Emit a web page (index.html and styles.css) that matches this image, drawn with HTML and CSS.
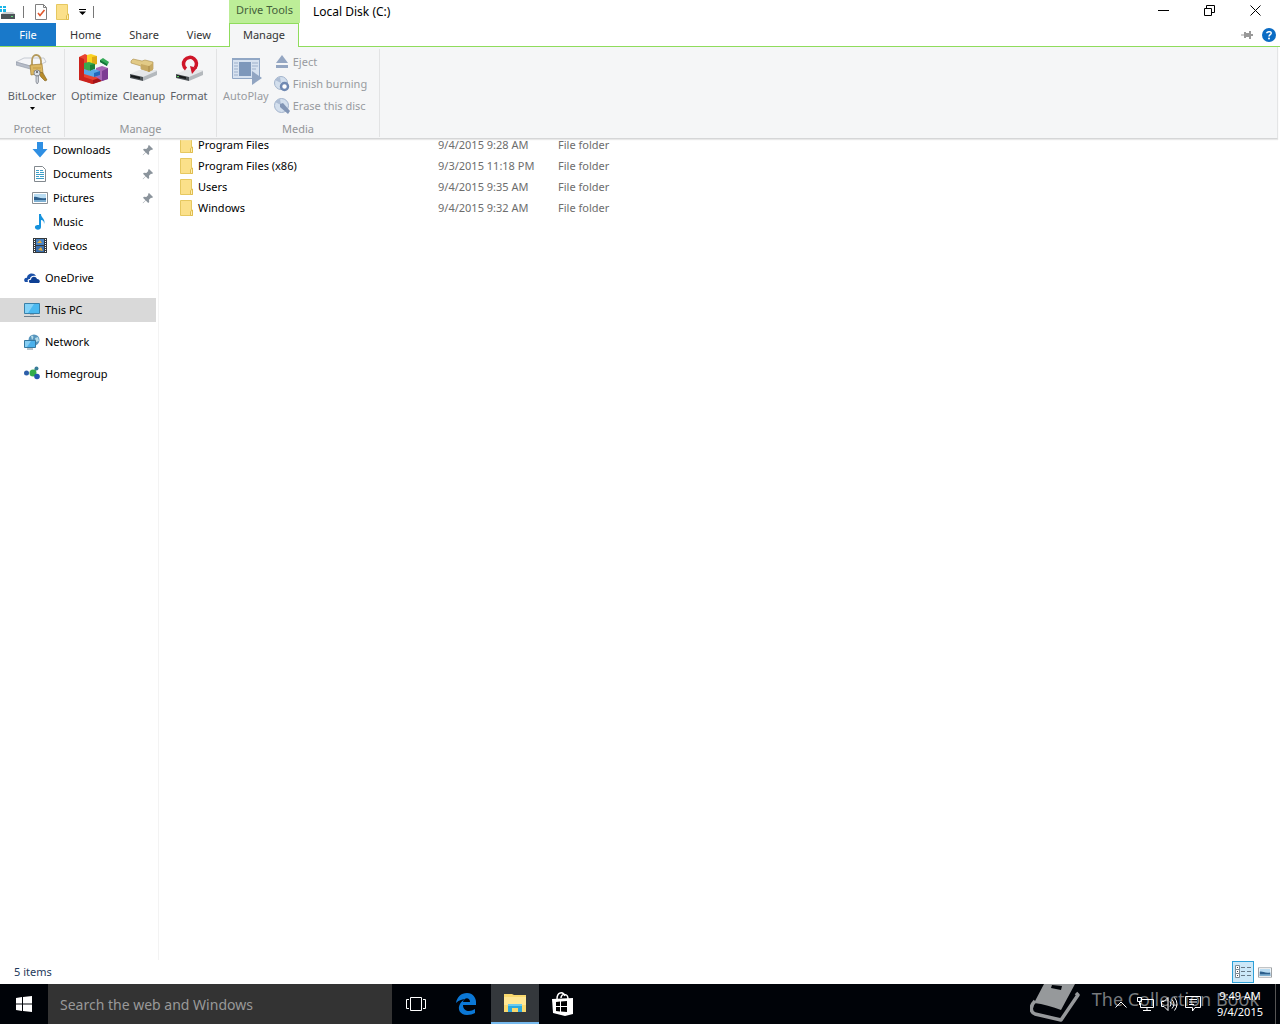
FILE: index.html
```html
<!DOCTYPE html>
<html lang="en">
<head>
<meta charset="utf-8">
<meta name="viewport" content="width=device-width, initial-scale=1">
<title>Local Disk (C:)</title>
<link rel="stylesheet" href="styles.css">
</head>
<body>

<!-- shared icons -->
<svg class="defs" aria-hidden="true">
  <symbol id="folder" viewBox="0 0 14 16">
    <path d="M0.5 0.5h11v10h1v5h-12z" fill="#fbe08a" stroke="#e6c860"/>
    <path d="M10.500 15.500v-4l2-1.500v5.500z" fill="#fff0b0" stroke="#e0bd50"/>
  </symbol>
  <symbol id="pin" viewBox="0 0 12 12">
    <path d="M7 1l4 4-1 1-1-.3-2 2 .2 2.300-1 1L3.800 8.500 1 11.300.7 11 3.500 8.200 1 5.800l1-1 2.300.2 2-2L6 2z" fill="#8b949c"/>
  </symbol>
  <symbol id="picture" viewBox="0 0 16 12">
    <path d="M.5.5h15v11H.5z" fill="#fff" stroke="#8a8f94"/>
    <path d="M2 2h12v8H2z" fill="#b9dcf2"/>
    <path d="M2 5c3-1 5 2 12 1v4H2z" fill="#2d5f8c"/>
    <path d="M2 8h12v2H2z" fill="#7fb0d2"/>
  </symbol>
</svg>

<header>
  <div class="titlebar">
    <div class="quick">
      <svg class="drive" width="15" height="16" viewBox="0 0 15 16">
        <path d="M0 2h2v2H0zM3 2h3v2H3zM0 5h2v3H0zM3 5h3v3H3z" fill="#19b5e8"/>
        <path d="M4 8h9l2 2H1z" fill="#c9ced2"/>
        <path d="M1 10h14v5H1z" fill="#4d5459"/>
        <path d="M11 12h2v1h-2z" fill="#5fe07a"/>
      </svg>
      <span class="bar"></span>
      <button class="q" title="Properties">
        <svg width="12" height="16" viewBox="0 0 12 16">
          <path d="M.5.5h8l3 3v12H.5z" fill="#fff" stroke="#808080"/>
          <path d="M8.500.5v3h3" fill="none" stroke="#808080"/>
          <path d="M3 9l2 2.500L9.500 6" fill="none" stroke="#e0572c" stroke-width="1.600"/>
        </svg>
      </button>
      <button class="q" title="New folder"><svg width="14" height="16"><use href="#folder"/></svg></button>
      <button class="q more" title="Customize"><svg width="7" height="6" viewBox="0 0 7 6"><path d="M0 0h7v1H0zM0 2.500h7L3.500 6z"/></svg></button>
      <span class="bar"></span>
    </div>
    <div class="context">Drive Tools</div>
    <h1>Local Disk (C:)</h1>
    <div class="winbtns">
      <button title="Minimize"><svg width="11" height="11" viewBox="0 0 11 11"><path d="M0 5.500h11" stroke="#000"/></svg></button>
      <button title="Restore"><svg width="11" height="11" viewBox="0 0 11 11"><path d="M.5 3.500h7v7h-7zM2.500 3V.5h8v7H8" fill="none" stroke="#000"/></svg></button>
      <button title="Close"><svg width="11" height="11" viewBox="0 0 11 11"><path d="M.5.5l10 10M10.500.5l-10 10" stroke="#000"/></svg></button>
    </div>
  </div>

  <div class="tabrow">
    <nav class="tabs">
      <button class="file">File</button>
      <button>Home</button>
      <button>Share</button>
      <button>View</button>
      <button class="active">Manage</button>
    </nav>
    <div class="help">
      <button title="Pin the ribbon"><svg width="12" height="8" viewBox="0 0 12 8"><path d="M0 3.500h3V1h2v1h3V0h2v3h2v2h-2v3H8V6H5v1H3V4.500H0z" fill="#999"/></svg></button>
      <button title="Help">
        <svg width="14" height="14" viewBox="0 0 14 14">
          <circle cx="7" cy="7" r="7" fill="#0b6cc4"/>
          <path d="M4.800 5.300C4.900 3.200 9.200 3 9.200 5.200 9.200 6.700 7 6.700 7 8.500" fill="none" stroke="#fff" stroke-width="1.500"/>
          <circle cx="7" cy="10.500" r="1" fill="#fff"/>
        </svg>
      </button>
    </div>
  </div>

  <div class="ribbon">
    <section class="group protect">
      <div class="tools">
        <button class="tool">
          <svg width="32" height="32" viewBox="0 0 32 32">
            <path d="M0 9l8-4h20l2 4-12 5z" fill="#f4f5f8" stroke="#b3b9c3" stroke-width=".7"/>
            <path d="M0 9l18 5v3L0 12z" fill="#b7bdc9" stroke="#8f97a6" stroke-width=".6"/>
            <path d="M16 12V8c0-8 8-8 9 0v4" fill="none" stroke="#b49a5c" stroke-width="1.800"/>
            <path d="M14 12l12-1 1 9-12 2z" fill="#dcb863" stroke="#a07c30" stroke-width=".7"/>
            <path d="M17 15h8M17 18h8" stroke="#c39a45"/>
            <path d="M24 19l3 1 4 7-2 1-4-4-2-3z" fill="#b88c2b" stroke="#80601e" stroke-width=".6"/>
            <circle cx="21" cy="20" r="3" fill="#dce0e5" stroke="#777d87" stroke-width=".8"/>
            <path d="M20 23h2.500v6l-1.300 2L20 29z" fill="#ccd1d8" stroke="#777d87" stroke-width=".7"/>
            <circle cx="21" cy="19" r="1" fill="#555"/>
          </svg>
          <span>BitLocker</span>
          <svg class="arrow" width="5" height="3" viewBox="0 0 5 3"><path d="M0 0h5L2.500 3z"/></svg>
        </button>
      </div>
      <h2>Protect</h2>
    </section>

    <section class="group manage">
      <div class="tools">
        <button class="tool">
          <svg width="32" height="32" viewBox="0 0 32 32">
            <path d="M1 4l6-3 4 2v18l9 3 3 1v3l-9 3-13-5z" fill="#ea4430"/>
            <path d="M1 4l5 2v18l9 3v4L1 27z" fill="#cb231d"/>
            <path d="M15 27l9-3v4l-9 3z" fill="#a51419"/>
            <path d="M9 2l4-1 6 2v8l-5 1-5-2z" fill="#fbd322"/>
            <path d="M14 4l5-1v8l-5 1z" fill="#dfa815"/>
            <path d="M18 15l6-2 6 2v11l-6 2-6-4z" fill="#a565b5"/>
            <path d="M24 18l6-3v11l-6 2z" fill="#7c3b93"/>
            <path d="M6 10l5-1 6 2v5l-5 2-6-2z" fill="#38a94f"/>
            <path d="M12 12l5-1v5l-5 2z" fill="#1c8039"/>
            <path d="M6 16l6 2 4-2 6 2v4l-6 2-10-3z" fill="#5aa9e8"/>
            <path d="M16 20l6-2v4l-6 2z" fill="#2468bb"/>
            <path d="M22 7l3-2 6 4-2 4-7-4z" fill="#35a957"/>
            <path d="M22 7l7 4v2l-7-4z" fill="#13733a"/>
          </svg>
          <span>Optimize</span>
        </button>
        <button class="tool">
          <svg width="32" height="32" viewBox="0 0 32 32">
            <path d="M2 21l9-4h18v3l-14 7-13-3z" fill="#e5e7e9"/>
            <path d="M2 21l13 3v4L2 25z" fill="#4a5054"/>
            <path d="M15 24l14-6v4l-14 6z" fill="#b4b9bd"/>
            <path d="M3 22l9 2v2l-9-2z" fill="#151819"/>
            <path d="M3 8l2-2 9 2 3-1 8 2v7l-4 2-8-2v-3L3 10z" fill="#e2ca86" stroke="#a98c47" stroke-width=".6"/>
            <path d="M13 11l8 2 4-3v7l-4 2-8-3z" fill="#c8aa63"/>
            <path d="M21 13v6" stroke="#9a7c3c" stroke-width=".7"/>
          </svg>
          <span>Cleanup</span>
        </button>
        <button class="tool">
          <svg width="32" height="32" viewBox="0 0 32 32">
            <path d="M3 21l9-4h18v3l-14 7-13-3z" fill="#e5e7e9"/>
            <path d="M3 21l13 3v4L3 25z" fill="#4a5054"/>
            <path d="M16 24l14-6v4l-14 6z" fill="#b4b9bd"/>
            <path d="M4 22l9 2v2l-9-2z" fill="#151819"/>
            <path d="M13 16A6.500 6.500 0 1 1 22 15" fill="none" stroke="#cf1629" stroke-width="3.500"/>
            <path d="M17 13l7 2-5 6z" fill="#cf1629"/>
            <path d="M4 23h2v1H4z" fill="#5bd05b"/>
          </svg>
          <span>Format</span>
        </button>
      </div>
      <h2>Manage</h2>
    </section>

    <section class="group media">
      <div class="tools">
        <button class="tool" disabled>
          <svg width="32" height="32" viewBox="0 0 32 32">
            <path d="M2.500 5.500h27v20h-27z" fill="#d7e2f0" stroke="#91a7c5"/>
            <path d="M2 5h28v2H2z" fill="#91a7c5"/>
            <path d="M4 10h4M4 13h4M4 16h4M4 19h4M4 22h4M22 10h6M22 13h6M22 16h4" stroke="#9db0cb"/>
            <path d="M9 9h12v14H9z" fill="#7e98bb"/>
            <path d="M22 18l10 7-10 7z" fill="#91a5c2"/>
          </svg>
          <span>AutoPlay</span>
        </button>
        <div class="small">
          <button disabled><svg width="16" height="16" viewBox="0 0 16 16"><path d="M8 1l6 8H2zM2 11h12v3H2z" fill="#94a6c2"/></svg>Eject</button>
          <button disabled>
            <svg width="16" height="16" viewBox="0 0 16 16"><circle cx="7" cy="7" r="6.500" fill="#d3dfed" stroke="#a2b3cc"/><path d="M7 7L1 4a7 7 0 0 1 5-3z" fill="#adbdd4"/><circle cx="10.500" cy="10.500" r="3.500" fill="#fff" stroke="#7089b2" stroke-width="2.500"/></svg>Finish burning</button>
          <button disabled>
            <svg width="16" height="16" viewBox="0 0 16 16"><circle cx="7.500" cy="7.500" r="7" fill="#d3dfed" stroke="#a2b3cc"/><path d="M7 7L1 4a7 7 0 0 1 5-3z" fill="#adbdd4"/><path d="M6 6l3-1 7 8-2 3-8-7z" fill="#8195b5"/></svg>Erase this disc</button>
        </div>
      </div>
      <h2>Media</h2>
    </section>
  </div>
</header>

<main>
  <aside>
    <ul class="places">
      <li class="sub"><a href="#">
        <svg width="16" height="16" viewBox="0 0 16 16"><path d="M5 0h6v7h4.500L8 15.500.5 7H5z" fill="#2f8fe3"/></svg>
        Downloads</a><svg class="pinned" width="12" height="12"><use href="#pin"/></svg></li>
      <li class="sub"><a href="#">
        <svg width="16" height="16" viewBox="0 0 16 16"><path d="M2.500.5h8l3 3v12h-11z" fill="#fff" stroke="#82898e"/><path d="M4 6.500h3M4 4.500h3M8 4.500h3M8 6.500h4M4 8.500h8M4 10.500h3M8 10.500h4M4 12.500h8" stroke="#3d9fc8"/></svg>
        Documents</a><svg class="pinned" width="12" height="12"><use href="#pin"/></svg></li>
      <li class="sub"><a href="#">
        <svg width="16" height="12"><use href="#picture"/></svg>
        Pictures</a><svg class="pinned" width="12" height="12"><use href="#pin"/></svg></li>
      <li class="sub"><a href="#">
        <svg width="16" height="16" viewBox="0 0 16 16"><path d="M7 0h2c0 4 5 5 3 10 0-3-1-4-3-4v7c0 4-7 3-6 0 0-2 3-2 4-2z" fill="#1592dd"/></svg>
        Music</a></li>
      <li class="sub"><a href="#">
        <svg width="16" height="16" viewBox="0 0 16 16"><path d="M1 0h14v15H1z" fill="#34393d"/><path d="M4 1h8v6H4z" fill="#4883c4"/><path d="M4 8h8v6H4z" fill="#386eae"/><path d="M5 5l3-3 2 3zM6 12l3-3 2 4z" fill="#e0a93c"/><path d="M2.500 1v14M13.500 1v14" stroke="#fff" stroke-dasharray="1 1"/></svg>
        Videos</a></li>
      <li class="root"><a href="#">
        <svg width="16" height="16" viewBox="0 0 16 16"><path d="M1 12c-2-2 0-5 2-4 0-5 7-6 9-2-4-1-6 1-6 3-2 0-3 1-2 3z" fill="#1a50a8"/><path d="M6 13c-2-1-1-4 1-3 0-4 5-4 6-1 3 0 4 4 1 4z" fill="#0d3f94"/></svg>
        OneDrive</a></li>
      <li class="root current"><a href="#">
        <svg width="16" height="16" viewBox="0 0 16 16"><path d="M.5 1.500h15v10H.5z" fill="#4bb9f0" stroke="#3980a9"/><path d="M1 2h9L4 11H1z" fill="#83d2f8"/><path d="M6 12h4v1H6z" fill="#a7afb5"/><path d="M0 14h16v1H0z" fill="#6d7e8b"/></svg>
        This PC</a></li>
      <li class="root"><a href="#">
        <svg width="16" height="16" viewBox="0 0 16 16"><circle cx="10" cy="6" r="5.500" fill="#5795bd"/><path d="M7 2c3-1 3 2 1 4zM11 4l3-1 1 4-3 1z" fill="#b4dbe9"/><path d="M.5 6.500h11v7H.5z" fill="#4cb1eb" stroke="#34789f"/><path d="M1 7h6l-4 6H1z" fill="#87cef3"/><path d="M3 15h6" stroke="#718796"/></svg>
        Network</a></li>
      <li class="root"><a href="#">
        <svg width="16" height="16" viewBox="0 0 16 16"><circle cx="2.500" cy="7" r="2.500" fill="#2d5fa9"/><path d="M9 7l3-4M9 7l5 4" stroke="#55ad63" stroke-width="2"/><circle cx="9" cy="7" r="3.500" fill="#32ad4b"/><circle cx="12.500" cy="2.500" r="2" fill="#397c98"/><circle cx="13" cy="10.500" r="2.800" fill="#2456b0"/></svg>
        Homegroup</a></li>
    </ul>
  </aside>

  <div class="list">
    <table>
      <tr>
        <td class="name"><svg width="14" height="16"><use href="#folder"/></svg>Program Files</td>
        <td class="date">9/4/2015 9:28 AM</td>
        <td>File folder</td>
      </tr>
      <tr>
        <td class="name"><svg width="14" height="16"><use href="#folder"/></svg>Program Files (x86)</td>
        <td class="date">9/3/2015 11:18 PM</td>
        <td>File folder</td>
      </tr>
      <tr>
        <td class="name"><svg width="14" height="16"><use href="#folder"/></svg>Users</td>
        <td class="date">9/4/2015 9:35 AM</td>
        <td>File folder</td>
      </tr>
      <tr>
        <td class="name"><svg width="14" height="16"><use href="#folder"/></svg>Windows</td>
        <td class="date">9/4/2015 9:32 AM</td>
        <td>File folder</td>
      </tr>
    </table>
  </div>
</main>

<div class="status">
  <span>5 items</span>
  <div class="views">
    <button class="on" title="Details">
      <svg width="16" height="14" viewBox="0 0 16 14"><path d="M.5.5h4v4h-4zM.5 4.500h4v4h-4zM.5 8.500h4v4h-4z" fill="#fff" stroke="#7b8b97"/><path d="M2 2h1v1H2zM2 6h1v1H2zM2 10h1v1H2z" fill="#444"/><path d="M6 2.500h4M12 2.500h4M6 6.500h4M12 6.500h4M6 10.500h4M12 10.500h4" stroke="#687987"/></svg>
    </button>
    <button title="Large icons"><svg width="14" height="11" viewBox="0 0 16 12"><use href="#picture"/></svg></button>
  </div>
</div>

<footer class="taskbar">
  <button class="start" title="Start">
    <svg width="16" height="16" viewBox="0 0 16 16"><path d="M0 2l6-1v6.500H0zM7 1l9-1v7.500H7zM0 8.500h6V15l-6-1zM7 8.500h9V16l-9-1z" fill="#fff"/></svg>
  </button>
  <input class="search" type="text" placeholder="Search the web and Windows" aria-label="Search the web and Windows">
  <button class="task" title="Task View">
    <svg width="20" height="16" viewBox="0 0 20 16"><path d="M4.500 1.500h11v13h-11zM3 3.500H.5v9H3M17 3.500h2.500v9H17" fill="none" stroke="#fff"/></svg>
  </button>
  <button class="task wide" title="Microsoft Edge">
    <svg width="20" height="22" viewBox="0 0 20 22"><path d="M0 10C1 4 5 0 11 0c6 0 9 5 9 9v3H7c0 4 3 6 6 6 2 0 4-1 6-2v4c-2 1-5 2-8 2-7 0-10-6-7-11 1-2 3-4 5-5-2 0-6 1-9 4zM7 9h7c0-5-6-5-7 0z" fill="#0b78d6"/></svg>
  </button>
  <button class="task open" title="File Explorer">
    <svg width="22" height="20" viewBox="0 0 22 20"><path d="M0 1h8l2 1h12v17H0z" fill="#f9d96e"/><path d="M0 4h22v8H0z" fill="#ffe794"/><path d="M4 19v-8h14v8h-4v-4H8v4z" fill="#2aa9df"/><path d="M4 11h14v2H4z" fill="#6bcaf0"/></svg>
  </button>
  <button class="task" title="Store">
    <svg width="22" height="24" viewBox="0 0 22 24"><path d="M5 7c0-7 6-8 8-3M9 6c0-5 7-5 7 1" fill="none" stroke="#fff" stroke-width="1.500"/><path d="M0 7l21-1v16l-8 2L1 21z" fill="#fff"/><path d="M4 10l4-.5V14H4zM9 9.500l6-.5v5H9zM4 15h4v4.500L4 19zM9 15h6v5l-6-.5z" fill="#000"/></svg>
  </button>

  <div class="tray">
    <button title="Show hidden icons"><svg width="12" height="7" viewBox="0 0 12 7"><path d="M.5 6.500L6 1l5.500 5.500" fill="none" stroke="#fff"/></svg></button>
    <button title="Network"><svg width="17" height="14" viewBox="0 0 17 14"><path d="M5 2.500h11.500v8H3.500V6M6 13.500h8M10 11v2.500M.5.5h4v4h-4zM2.500 5v3" fill="none" stroke="#fff"/></svg></button>
    <button title="Volume"><svg width="17" height="14" viewBox="0 0 17 14"><path d="M.5 4.500H3l4-4v13l-4-4H.5zM9 4.500q2 2.500 0 5M11 2.500q4 4.500 0 9M13.500.5q5 6.500 0 13" fill="none" stroke="#fff"/></svg></button>
    <button title="Notifications"><svg width="17" height="16" viewBox="0 0 17 16"><path d="M.5.5h15v11H10L7.500 15v-3.500h-7zM4 3.500h8M4 6h8M4 8.500h5" fill="none" stroke="#fff"/></svg></button>
    <div class="clock"><time>9:49 AM</time><time>9/4/2015</time></div>
    <button class="desktop" title="Show desktop"></button>
  </div>

  <div class="mark">
    <svg width="50" height="40" viewBox="0 0 50 40">
      <path d="M14 0h31L31 26C23 23 13 20 4 19z" fill="#96999b"/>
      <path d="M5 17c-5 5-5 11 0 13l26 6L48 11l-2-2" fill="none" stroke="#96999b" stroke-width="3.500" stroke-linejoin="round"/>
      <path d="M22 1l10 1-1 4-10-2z" fill="#000308"/>
    </svg>
    <span>The Collection Book</span>
  </div>
</footer>

</body>
</html>
```

FILE: styles.css
```css
* {
  box-sizing: border-box;
}

body {
  margin: 0;
  height: 100vh;
  display: flex;
  flex-direction: column;
  overflow: hidden;
  background: #fff;
  color: #111;
  font-family: "Noto Sans", "Open Sans", sans-serif;
  font-size: 11px;
  line-height: 16px;
}

button {
  display: flex;
  align-items: center;
  justify-content: center;
  padding: 0;
  border: 0;
  background: none;
  color: inherit;
  font: inherit;
}

svg {
  display: block;
  flex: none;
}

.defs {
  position: absolute;
  width: 0;
  height: 0;
}

h1, h2 {
  margin: 0;
  font-size: 11px;
  font-weight: normal;
}

/* title bar and tabs */
header {
  position: relative;
  z-index: 2;
}

.titlebar {
  display: flex;
  height: 23px;
}

.quick {
  display: flex;
  align-items: center;
  width: 229px;
}

.drive {
  margin-right: 8px;
}

.bar {
  width: 1px;
  height: 12px;
  background: #777;
}

.q {
  width: 22px;
}

.q:first-of-type {
  margin-left: 6px;
}

.more {
  width: 16px;
  margin-right: 3px;
}

.context {
  width: 71px;
  line-height: 20px;
  background: #bdee98;
  color: #44603a;
  text-align: center;
}

h1 {
  margin-left: 13px;
  color: #000;
  font-size: 12px;
  line-height: 23px;
}

.winbtns {
  display: flex;
  margin-left: auto;
  margin-right: 2px;
}

.winbtns button {
  width: 46px;
  height: 21px;
}

.tabrow {
  display: flex;
  justify-content: space-between;
  height: 24px;
  border-bottom: 1px solid #8fdc5c;
}

.tabs {
  display: flex;
  width: 299px;
}

.tabs button {
  padding: 0 14px;
  color: #333;
}

.tabs .file {
  width: 56px;
  background: #1979ca;
  color: #fff;
}

.tabs .active {
  width: 70px;
  height: 24px;
  margin-left: auto;
  padding: 0 0 2px;
  background: #f5f6f7;
  border: 1px solid #8fdc5c;
  border-bottom: 0;
}

.help {
  display: flex;
  align-items: center;
  gap: 9px;
  margin-right: 4px;
}

/* the ribbon drops down over the file list */
.ribbon {
  position: absolute;
  top: 100%;
  left: 0;
  right: 2px;
  display: flex;
  height: 92px;
  background: #f5f6f7;
  border-right: 1px solid #e4e5e6;
  border-bottom: 1px solid #d5d6d7;
  box-shadow: 0 1px 1px #e8e8e8;
  color: #5b5f66;
}

.group {
  display: flex;
  flex-direction: column;
  justify-content: space-between;
  margin: 2px 0 1px;
  border-right: 1px solid #e2e3e4;
}

.group h2 {
  color: #929497;
  text-align: center;
}

.tools {
  display: flex;
  padding-top: 4px;
}

.protect {
  width: 65px;
}

.protect .tools {
  justify-content: center;
}

.manage {
  width: 152px;
}

.media {
  width: 163px;
}

.manage .tools {
  gap: 5px;
  padding-left: 6px;
}

.media .tools {
  gap: 5px;
  padding-top: 2px;
  padding-left: 6px;
}

.tool {
  flex-direction: column;
  justify-content: flex-start;
}

.media .tool {
  padding-top: 2px;
}

.tool span {
  margin-top: 3px;
}

.arrow {
  margin-top: 3px;
}

.tool:disabled, .small button:disabled {
  color: #989ba0;
}

.small button {
  gap: 3px;
  height: 22px;
}

/* folder window */
main {
  flex: 1;
  display: flex;
  min-height: 0;
}

aside {
  width: 159px;
  padding-top: 91px;
  border-right: 1px solid #f3f3f3;
}

.places {
  margin: 0;
  padding: 0;
  list-style: none;
}

.places li {
  display: flex;
  align-items: center;
  justify-content: space-between;
  height: 24px;
  margin-right: 2px;
  padding-right: 2px;
}

.places a {
  display: flex;
  align-items: center;
  gap: 5px;
  color: #000;
  text-decoration: none;
}

.places .sub {
  padding-left: 32px;
}

.places .root {
  margin-top: 8px;
  padding-left: 24px;
}

.places .current {
  background: #d9d9d9;
}

.list {
  flex: 1;
  padding: 87px 0 0 21px;
}

table {
  border-collapse: collapse;
}

td {
  height: 21px;
  padding: 0;
  color: #6d6d6d;
}

.name {
  display: flex;
  align-items: center;
  gap: 4px;
  width: 258px;
  color: #000;
}

.date {
  width: 120px;
}

.status {
  display: flex;
  align-items: center;
  justify-content: space-between;
  height: 24px;
  padding: 0 4px 0 14px;
  color: #1e395b;
}

.views {
  display: flex;
}

.views button {
  width: 22px;
  height: 22px;
}

.views .on {
  background: #cce8f8;
  border: 1px solid #2da0d8;
}

/* taskbar */
.taskbar {
  position: relative;
  display: flex;
  height: 40px;
  background: #000308;
  color: #fff;
}

.start {
  width: 48px;
}

.search {
  width: 344px;
  padding: 0 12px;
  border: 0;
  background: #333;
  color: #fff;
  font: 14px "Noto Sans", sans-serif;
}

.search::placeholder {
  color: #999;
  opacity: 1;
}

.task {
  width: 48px;
}

.wide {
  width: 51px;
}

.open {
  background: #34383c;
  border-bottom: 2px solid #76b9ed;
}

.tray {
  z-index: 1;
  display: flex;
  align-items: center;
  margin-left: auto;
}

.tray button {
  width: 24px;
  height: 40px;
}

.clock {
  display: flex;
  flex-direction: column;
  width: 70px;
  text-align: center;
}

.tray .desktop {
  width: 5px;
  border-left: 1px solid #555;
}

.mark {
  position: absolute;
  top: 0;
  right: 21px;
  display: flex;
  gap: 12px;
  color: #777a7d;
  font-size: 18px;
  line-height: 30px;
}
```
